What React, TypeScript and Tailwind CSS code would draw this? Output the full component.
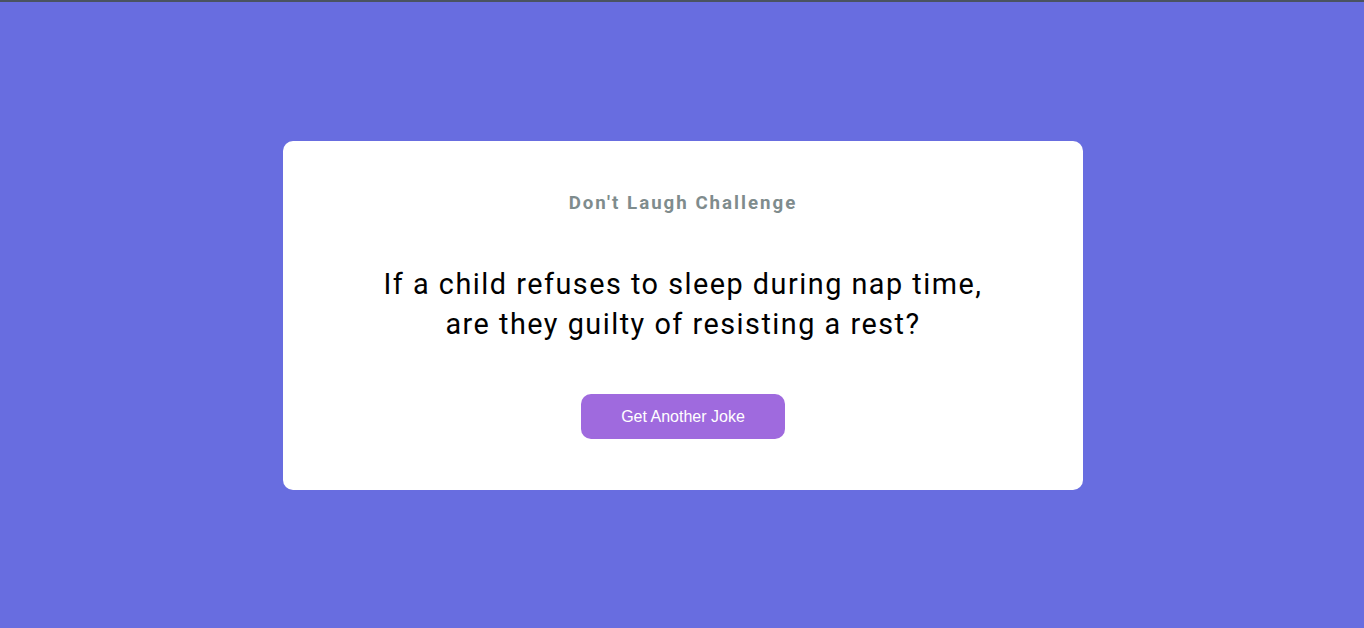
import React from "react";

export default function App() {
  return (
    <div className="min-h-screen bg-[#686de0] font-['Roboto',sans-serif]">
      <div className="h-[2px] bg-[#4a5361]" />
      <div className="flex h-[626px] items-center justify-center pl-[2px]">
        <div className="w-[800px] rounded-[10px] bg-white px-[50px] pt-[50px] pb-[51px] text-center">
          <h3 className="text-[18.7px] font-bold leading-[24px] tracking-[2px] text-[#7f8c8d]">
            Don't Laugh Challenge
          </h3>
          <p className="mx-auto mt-[49px] max-w-[620px] text-[28.8px] leading-[40px] tracking-[1.5px] text-black">
            If a child refuses to sleep during nap time,
            <br />
            are they guilty of resisting a rest?
          </p>
          <button className="mt-[50px] rounded-[10px] bg-[#9f6ade] px-[40px] py-[13px] font-['Liberation_Sans',Arial,sans-serif] text-[16px] leading-[19px] text-white">
            Get Another Joke
          </button>
        </div>
      </div>
    </div>
  );
}
